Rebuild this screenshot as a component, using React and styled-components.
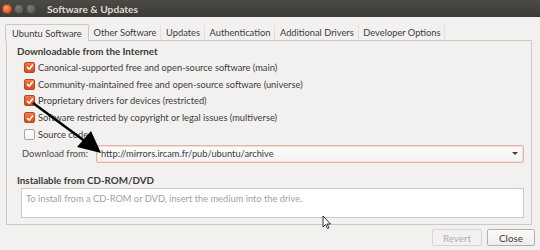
import styled, { createGlobalStyle } from 'styled-components'

const GlobalStyle = createGlobalStyle`
    body {
        margin: 0;
        background: #f2f1f0;
        font-family: Lato, "Liberation Sans", sans-serif;
        color: #3c3c3c;
    }
`

const Window = styled.div`
    position: relative;
    width: 540px;
    height: 250px;
    overflow: hidden;
    display: flex;
    flex-direction: column;
    background: #f2f1f0;
    font-size: 9.3px;
`

const TitleBar = styled.div`
    height: 17px;
    display: flex;
    align-items: center;
    padding-left: 2px;
    gap: 1px;
    background: linear-gradient(#4b4a45, #3b3a36);
`

const WinButton = styled.div`
    width: 10px;
    height: 10px;
    border-radius: 50%;
    margin-right: 1px;
    background: ${props => props.$close
        ? 'radial-gradient(circle at 40% 35%, #f59b77, #e4582a 60%, #b8431c)'
        : 'radial-gradient(circle at 40% 35%, #7d7b74, #5a5953 70%)'};
    box-shadow: inset 0 0 0 1px ${props => props.$close ? '#9e3a17' : '#45443f'};
`

const Title = styled.span`
    margin-left: 9px;
    color: #dfdbd2;
    font-weight: bold;
    font-size: 10.2px;
`

const TabBar = styled.div`
    display: flex;
    margin-top: 7px;
    padding-left: 5px;
    height: 16px;
    position: relative;
    z-index: 1;
`

const Tab = styled.div`
    display: flex;
    align-items: center;
    padding: 0 ${props => props.$pad}px;
    box-sizing: border-box;
    color: #3c3c3c;
    background: ${props => props.$active ? '#f2f1f0' : 'transparent'};
    border: 1px solid ${props => props.$active ? '#cdcac5' : 'transparent'};
    border-bottom: none;
    border-radius: 2px 2px 0 0;
    height: ${props => props.$active ? '17px' : '16px'};
    border-right: 1px solid ${props => props.$active ? '#cdcac5' : '#e2e0dc'};
`

const Panel = styled.div`
    margin: 0 8px 0 6px;
    height: 185px;
    box-sizing: border-box;
    border: 1px solid #cdcac5;
    padding: 4px 7px 0 10px;
    display: flex;
    flex-direction: column;
`

const Heading = styled.div`
    font-weight: bold;
    font-size: 9.8px;
    height: 12px;
    line-height: 12px;
    margin-top: ${props => props.$top}px;
`

const CheckList = styled.div`
    margin-top: 2px;
    padding-left: 7px;
    display: flex;
    flex-direction: column;
`

const Row = styled.label`
    display: flex;
    align-items: center;
    height: 16.75px;
    gap: 3px;
`

const Box = styled.span`
    width: 11px;
    height: 11px;
    box-sizing: border-box;
    border-radius: 2px;
    display: flex;
    align-items: center;
    justify-content: center;
    background: ${props => props.$on ? 'linear-gradient(#f27a4c, #dc4a18)' : 'linear-gradient(#ffffff, #f4f3f2)'};
    border: 1px solid ${props => props.$on ? '#b9461d' : '#a9a6a1'};
`

const DownloadRow = styled.div`
    display: flex;
    align-items: center;
    margin-top: 2px;
    padding-left: 5px;
    height: 18px;
`

const Label = styled.span`
    width: 74px;
    color: #4a4a4a;
`

const Combo = styled.div`
    flex: 1;
    height: 18px;
    box-sizing: border-box;
    display: flex;
    align-items: center;
    justify-content: space-between;
    padding: 0 5px 0 4px;
    border: 1px solid #e4b3aa;
    border-radius: 2px;
    background: linear-gradient(#fdfcfc, #f5f3f2);
    box-shadow: inset 0 0 0 1px #f5dcd6;
`

const Caret = styled.span`
    width: 0;
    height: 0;
    border-left: 3px solid transparent;
    border-right: 3px solid transparent;
    border-top: 3px solid #3c3c3c;
`

const TextArea = styled.div`
    margin: 2px 0 0 4px;
    height: 30px;
    box-sizing: border-box;
    border: 1px solid #cdcac5;
    background: #fff;
    padding: 4px 4px;
    color: #a3a19d;
`

const ButtonRow = styled.div`
    display: flex;
    justify-content: flex-end;
    gap: 5px;
    margin-top: 4px;
    padding-right: 5px;
`

const Button = styled.div`
    width: ${props => props.$w}px;
    height: 17px;
    box-sizing: border-box;
    display: flex;
    align-items: center;
    justify-content: center;
    border-radius: 2px;
    border: 1px solid ${props => props.$disabled ? '#d8d5d0' : '#b4b0a9'};
    color: ${props => props.$disabled ? '#b2afaa' : '#3c3c3c'};
    background: ${props => props.$disabled ? '#f2f1f0' : 'linear-gradient(#fbfbfa, #eeedeb)'};
    font-size: 9.8px;
`

const Overlay = styled.svg`
    position: absolute;
    left: 0;
    top: 0;
    pointer-events: none;
`

const tabs = [
    ['Ubuntu Software', 6, true],
    ['Other Software', 3.8],
    ['Updates', 3.8],
    ['Authentication', 3.8],
    ['Additional Drivers', 3.8],
    ['Developer Options', 3.8],
]

const sources = [
    ['Canonical-supported free and open-source software (main)', true],
    ['Community-maintained free and open-source software (universe)', true],
    ['Proprietary drivers for devices (restricted)', true],
    ['Software restricted by copyright or legal issues (multiverse)', true],
    ['Source code', false],
]

function Check() {
    return (
        <svg width="8" height="8" viewBox="0 0 8 8">
            <path d="M1 4.2 L3.2 6.2 L7 1.6" fill="none" stroke="#fff" strokeWidth="1.6" />
        </svg>
    )
}

export default function App() {
    return (
        <Window>
            <GlobalStyle />
            <TitleBar>
                <WinButton $close />
                <WinButton />
                <WinButton />
                <Title>Software &amp; Updates</Title>
            </TitleBar>

            <TabBar>
                {tabs.map(([name, pad, active]) => (
                    <Tab key={name} $pad={pad} $active={active}>{name}</Tab>
                ))}
            </TabBar>

            <Panel>
                <Heading $top={0}>Downloadable from the Internet</Heading>
                <CheckList>
                    {sources.map(([text, on]) => (
                        <Row key={text}>
                            <Box $on={on}>{on && <Check />}</Box>
                            {text}
                        </Row>
                    ))}
                </CheckList>
                <DownloadRow>
                    <Label>Download from:</Label>
                    <Combo>
                        http://mirrors.ircam.fr/pub/ubuntu/archive
                        <Caret />
                    </Combo>
                </DownloadRow>
                <Heading $top={11}>Installable from CD-ROM/DVD</Heading>
                <TextArea>To install from a CD-ROM or DVD, insert the medium into the drive.</TextArea>
            </Panel>

            <ButtonRow>
                <Button $w={50} $disabled>Revert</Button>
                <Button $w={48}>Close</Button>
            </ButtonRow>

            <Overlay width="540" height="250">
                <line x1="33" y1="103" x2="86" y2="142" stroke="#000" strokeWidth="2.5" />
                <polygon points="101,153 77,147 91,131" fill="#000" />
                <path d="M323 216 L323 227 L325.5 224.5 L327.5 228.5 L329 227.8 L327 224 L330.5 224 Z"
                    fill="#fff" stroke="#000" strokeWidth="0.8" strokeLinejoin="round" />
            </Overlay>
        </Window>
    )
}
